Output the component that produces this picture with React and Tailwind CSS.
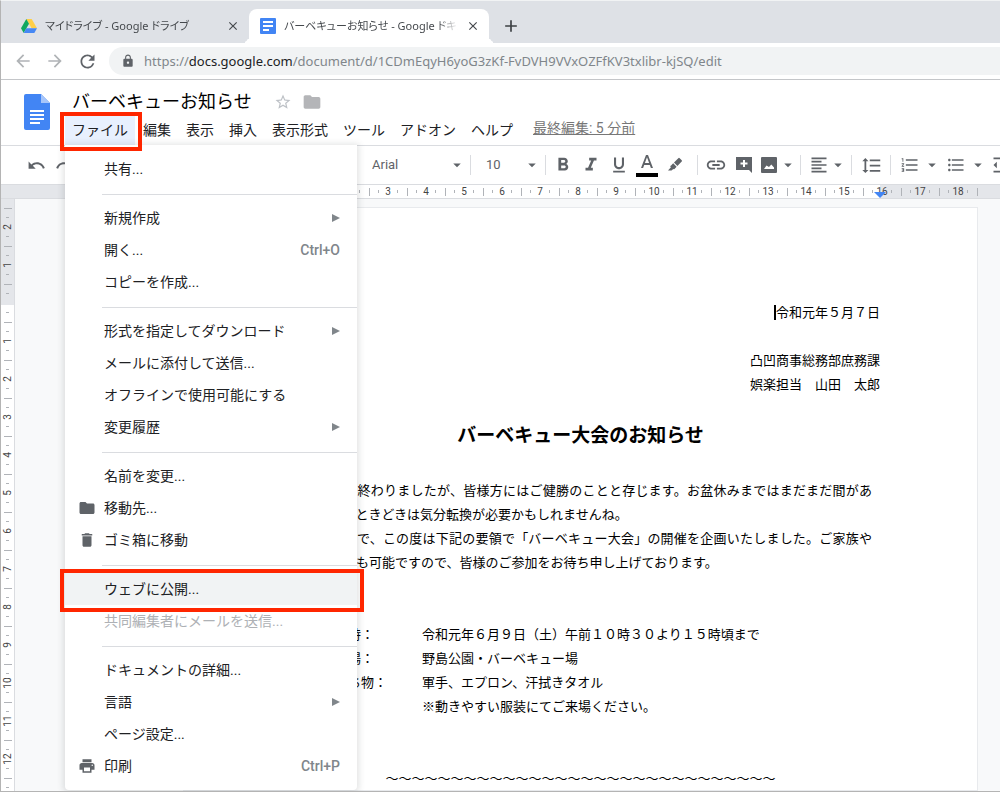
import clsx from "clsx";
import {
  MdAdd,
  MdArrowBack,
  MdArrowDropDown,
  MdArrowForward,
  MdClose,
  MdDelete,
  MdFolder,
  MdFormatAlignLeft,
  MdFormatBold,
  MdFormatIndentDecrease,
  MdFormatItalic,
  MdFormatLineSpacing,
  MdFormatListBulleted,
  MdFormatListNumbered,
  MdFormatUnderlined,
  MdLink,
  MdLock,
  MdPrint,
  MdRedo,
  MdRefresh,
  MdStarBorder,
  MdUndo,
} from "react-icons/md";

// null draws a separator line
const fileMenu = [
  { label: "共有..." },
  null,
  { label: "新規作成", sub: true },
  { label: "開く...", shortcut: "Ctrl+O" },
  { label: "コピーを作成..." },
  null,
  { label: "形式を指定してダウンロード", sub: true },
  { label: "メールに添付して送信..." },
  { label: "オフラインで使用可能にする" },
  { label: "変更履歴", sub: true },
  null,
  { label: "名前を変更..." },
  { label: "移動先...", icon: MdFolder },
  { label: "ゴミ箱に移動", icon: MdDelete },
  null,
  { label: "ウェブに公開...", active: true },
  { label: "共同編集者にメールを送信...", disabled: true },
  null,
  { label: "ドキュメントの詳細..." },
  { label: "言語", sub: true },
  { label: "ページ設定..." },
  { label: "印刷", icon: MdPrint, shortcut: "Ctrl+P" },
];

const menus = ["編集", "表示", "挿入", "表示形式", "ツール", "アドオン", "ヘルプ"];

const columns = Array.from({ length: 18 }, (_, i) => i + 1);
const rows = [2, 1, "", 1, 2, 3, 4, 5, 6, 7, 8, 9, 10, 11, 12, ""];

const paragraphs = [
  "　大型連休も終わりましたが、皆様方にはご健勝のことと存じます。お盆休みまではまだまだ間がありますので、ときどきは気分転換が必要かもしれませんね。",
  "　ということで、この度は下記の要領で「バーベキュー大会」の開催を企画いたしました。ご家族やご友人の参加も可能ですので、皆様のご参加をお待ち申し上げております。",
];

function DriveIcon() {
  return (
    <svg viewBox="0 0 16 14" className="w-4 h-[14px] shrink-0">
      <path d="M5.3 0h5.4L16 9.2h-5.4z" fill="#ffcf48" />
      <path d="M5.3 0 0 9.2 2.7 14 8 4.7z" fill="#11a861" />
      <path d="M5.3 9.2H16L13.3 14H2.7z" fill="#4688f4" />
    </svg>
  );
}

function DocsTabIcon() {
  return (
    <svg viewBox="0 0 16 16" className="size-4 shrink-0">
      <rect width="16" height="16" rx="1" fill="#4285f4" />
      <path d="M3 3h10v2H3zM3 7h10v2H3zM3 11h6v2H3z" fill="#fff" />
    </svg>
  );
}

function DocsLogo() {
  return (
    <svg viewBox="0 0 26 36" className="w-[26px] h-9 shrink-0">
      <path d="M2 0h15l9 9v25a2 2 0 0 1-2 2H2a2 2 0 0 1-2-2V2a2 2 0 0 1 2-2z" fill="#4285f4" />
      <path d="M17 0l9 9h-9z" fill="#a6c5fa" />
      <path d="M6 16h14v2H6zM6 20h14v2H6zM6 24h14v2H6zM6 28h10v2H6z" fill="#fff" />
    </svg>
  );
}

function HighlighterIcon() {
  return (
    <svg viewBox="0 0 16 16" className="size-4" fill="currentColor">
      <path d="M11.3 1.2a1 1 0 0 1 1.4 0l2 2a1 1 0 0 1 0 1.4L10.4 9 7 5.5z" />
      <path d="M6.2 6.3 9.6 9.8 7.5 11.9a1 1 0 0 1-1.2.2L4.5 13.5H1l2.9-3.2a1 1 0 0 1 .2-1.9z" />
    </svg>
  );
}

function CommentIcon() {
  return (
    <svg viewBox="0 0 16 16" className="size-4" fill="currentColor">
      <path fillRule="evenodd" d="M0 0h16v16l-3-3H0zM7 3v2.500H4.500v2H7V10h2V7.500h2.500v-2H9V3z" />
    </svg>
  );
}

function ImageIcon() {
  return (
    <svg viewBox="0 0 16 16" className="size-4" fill="currentColor">
      <path fillRule="evenodd" d="M0 1a1 1 0 0 1 1-1h14a1 1 0 0 1 1 1v14a1 1 0 0 1-1 1H1a1 1 0 0 1-1-1zM3 12h10V10.500L10.300 7.500 8 10 5.500 8.500z" />
    </svg>
  );
}

function ToolButton({ label, children }) {
  return (
    <button aria-label={label} className="w-7 h-7 shrink-0 flex items-center justify-center">
      {children}
    </button>
  );
}

function DropButton({ label, children, className }) {
  return (
    <button aria-label={label} className={clsx("h-7 shrink-0 flex items-center justify-center", className)}>
      {children}
      <MdArrowDropDown className="size-[18px] -mr-1" />
    </button>
  );
}

function Divider() {
  return <div className="w-px h-5 shrink-0 bg-[#dadce0]" />;
}

function ToolSelect({ label, value, className }) {
  return (
    <label className={clsx("relative flex items-center shrink-0", className)}>
      <select aria-label={label} className="w-full appearance-none bg-transparent text-[13px] leading-5">
        <option>{value}</option>
      </select>
      <MdArrowDropDown className="absolute right-1 size-[18px] pointer-events-none" />
    </label>
  );
}

function Tab({ icon, title, active }) {
  return (
    <div
      className={clsx(
        "relative flex items-center gap-2 h-[34px] shrink-0 pr-[9px] text-[#45494d]",
        active
          ? "w-[240px] pl-[11px] bg-white rounded-t-lg before:absolute before:-left-2 before:bottom-0 before:size-2 before:rounded-br-lg before:shadow-[4px_4px_0_white] after:absolute after:-right-2 after:bottom-0 after:size-2 after:rounded-bl-lg after:shadow-[-4px_4px_0_white]"
          : "w-[248px] pl-5"
      )}
    >
      {icon}
      <span className="flex-1 overflow-hidden whitespace-nowrap text-[11px] leading-5 [font-feature-settings:'palt'] [mask-image:linear-gradient(to_left,transparent,black_20px)]">
        {title}
      </span>
      <button aria-label="閉じる" className="shrink-0">
        <MdClose className="size-[14px]" />
      </button>
    </div>
  );
}

function BrowserBar() {
  return (
    <div className="shrink-0 font-['Noto_Sans','Noto_Sans_CJK_JP',sans-serif]">
      <div className="flex items-end h-[42px] bg-[#dee1e6]">
        <Tab icon={<DriveIcon />} title="マイドライブ - Google ドライブ" />
        <Tab icon={<DocsTabIcon />} title="バーベキューお知らせ - Google ドキュメント" active />
        <button aria-label="新しいタブ" className="ml-3 h-[34px] text-[#3c4043]">
          <MdAdd className="size-5" />
        </button>
      </div>
      <div className="flex items-center h-9 pl-3 text-[#5f6368]">
        <button aria-label="戻る" className="w-8 text-[#b0b3b6]">
          <MdArrowBack className="size-5" />
        </button>
        <button aria-label="進む" className="w-8 text-[#b0b3b6]">
          <MdArrowForward className="size-5" />
        </button>
        <button aria-label="再読み込み" className="w-8">
          <MdRefresh className="size-[21px]" />
        </button>
        <div className="flex-1 flex items-center gap-[9px] h-7 pl-3 rounded-l-full bg-[#f1f3f4]">
          <MdLock className="size-[14px]" />
          <p className="text-[13px] leading-5 text-[#80868b]">
            https://<span className="text-[#202124]">docs.google.com</span>
            /document/d/1CDmEqyH6yoG3zKf-FvDVH9VVxOZFfKV3txlibr-kjSQ/edit
          </p>
        </div>
      </div>
    </div>
  );
}

function FileMenu() {
  return (
    <div className="absolute left-0 top-full w-[292px] pt-2 pb-2 bg-white rounded-b shadow-[0_1px_6px_2px_rgba(60,64,67,0.15)]">
      {fileMenu.map((item, i) =>
        item === null ? (
          <hr key={i} className="ml-[37px] mt-[9px] mb-[7px] border-t border-[#dadce0]" />
        ) : (
          <button
            key={i}
            disabled={item.disabled}
            className={clsx(
              "relative flex items-center w-full h-8 pl-[13px] pr-[17px] text-[14px] leading-5",
              item.active && "bg-[#f1f3f4]",
              item.disabled ? "text-[#aeb1b5]" : "text-[#202124]"
            )}
          >
            <span className="w-[26px] text-[#5f6368]">
              {item.icon && <item.icon className="size-[18px]" />}
            </span>
            <span>{item.label}</span>
            {item.sub && (
              <svg viewBox="0 0 8 8" className="ml-auto size-2 text-[#80868b]" fill="currentColor">
                <path d="M0 0l8 4-8 4z" />
              </svg>
            )}
            {item.shortcut && <span className="ml-auto font-medium text-[#80868b]">{item.shortcut}</span>}
            {item.active && (
              <span className="absolute -left-[5px] -right-[7px] -top-1 -bottom-[7px] z-10 border-4 border-[#ff2600]" />
            )}
          </button>
        )
      )}
    </div>
  );
}

function Header() {
  return (
    <header className="relative z-20 flex h-[66px] shrink-0 pl-[23px] border-t border-[#c4c6c9]">
      <div className="pt-[14px]">
        <DocsLogo />
      </div>
      <div className="flex flex-col pl-[15px] pt-2">
        <div className="flex items-center h-7 pl-[7px]">
          <h1 className="text-[18px] leading-7 text-black">バーベキューお知らせ</h1>
          <button aria-label="スター" className="ml-[22px] text-[#bdc1c6]">
            <MdStarBorder className="size-[18px]" />
          </button>
          <button aria-label="フォルダ" className="ml-[10px] text-[#b4b5b8]">
            <MdFolder className="size-5" />
          </button>
        </div>
        <nav className="flex gap-px text-[14px] leading-[29px] text-[#202124]">
          <div className="relative">
            <button className="h-[29px] px-[7px] bg-[#e8f0fe]">ファイル</button>
            <FileMenu />
            <div className="absolute -left-[5px] -right-[7px] -top-1 -bottom-[6px] z-10 border-4 border-[#ff2600] pointer-events-none" />
          </div>
          {menus.map((m) => (
            <button key={m} className="h-[29px] px-[7px]">
              {m}
            </button>
          ))}
          <a href="#" className="ml-3 h-6 leading-6 text-[#777] underline">
            最終編集: 5 分前
          </a>
        </nav>
      </div>
    </header>
  );
}

function Toolbar() {
  return (
    <div className="flex items-center h-[39px] shrink-0 overflow-hidden border-t border-[#dadce0] text-[#5f6368]">
      <div className="flex w-[371px] shrink-0 pl-[21px]">
        <ToolButton label="元に戻す">
          <MdUndo className="size-[19px]" />
        </ToolButton>
        <ToolButton label="やり直し">
          <MdRedo className="size-[19px]" />
        </ToolButton>
      </div>
      <ToolSelect label="フォント" value="Arial" className="w-[98px]" />
      <Divider />
      <ToolSelect label="フォントサイズ" value="10" className="w-[74px] pl-[15px]" />
      <Divider />
      <div className="flex pl-[3px] pr-2">
        <ToolButton label="太字">
          <MdFormatBold className="size-[22px]" />
        </ToolButton>
        <ToolButton label="斜体">
          <MdFormatItalic className="size-[22px]" />
        </ToolButton>
        <ToolButton label="下線">
          <MdFormatUnderlined className="size-5" />
        </ToolButton>
        <ToolButton label="テキストの色">
          <svg viewBox="0 0 22 24" className="w-[22px] h-6">
            <path d="M10 2 5 15h2.100l1.100-3h5.600l1.100 3H17L12 2zm-1.100 8L11 4.300 13.100 10z" fill="currentColor" />
            <path d="M0 20h22v4H0z" fill="#000" />
          </svg>
        </ToolButton>
        <ToolButton label="ハイライトの色">
          <HighlighterIcon />
        </ToolButton>
      </div>
      <Divider />
      <div className="flex px-1">
        <ToolButton label="リンクを挿入">
          <MdLink className="size-[22px]" />
        </ToolButton>
        <ToolButton label="コメントを追加">
          <CommentIcon />
        </ToolButton>
        <DropButton label="画像を挿入" className="w-[38px] gap-[2px]">
          <ImageIcon />
        </DropButton>
      </div>
      <Divider />
      <DropButton label="配置" className="w-[50px]">
        <MdFormatAlignLeft className="size-5" />
      </DropButton>
      <Divider />
      <div className="px-[5px]">
        <ToolButton label="行間隔">
          <MdFormatLineSpacing className="size-[21px]" />
        </ToolButton>
      </div>
      <Divider />
      <div className="flex pl-1">
        <DropButton label="番号付きリスト" className="w-[46px] gap-[3px]">
          <MdFormatListNumbered className="size-5" />
        </DropButton>
        <DropButton label="箇条書き" className="w-[46px] gap-[3px]">
          <MdFormatListBulleted className="size-5" />
        </DropButton>
        <ToolButton label="インデント減">
          <MdFormatIndentDecrease className="size-5" />
        </ToolButton>
      </div>
    </div>
  );
}

function HorizontalRuler() {
  return (
    <div className="relative flex justify-end items-center h-[15px] pr-[23px] shrink-0 overflow-hidden border-y border-[#dadce0] bg-[#e4e6ea] text-[10px] leading-3 text-[#444]">
      <div className="absolute inset-y-0 right-[120px] w-[603px] bg-white" />
      {columns.map((n) => (
        <div key={n} className="relative flex items-center w-[38px] shrink-0">
          <i className="w-px h-2 bg-[#b0b3b8]" />
          <i className="w-px h-[3px] ml-2 bg-[#b0b3b8]" />
          <span className="w-[18px] text-center">{n}</span>
          <i className="w-px h-[3px] bg-[#b0b3b8]" />
        </div>
      ))}
      <i className="relative w-px h-2 -mr-px shrink-0 bg-[#b0b3b8]" />
      <svg viewBox="0 0 12 6" className="absolute right-[114px] bottom-0 w-3 h-[6px]">
        <path d="M0 0h12L6 6z" fill="#4285f4" />
      </svg>
    </div>
  );
}

function VerticalRuler() {
  return (
    <div className="relative w-[14px] shrink-0 overflow-hidden pt-[9px] border-r border-[#dadce0] bg-white text-[10px] leading-3 text-[#444]">
      <div className="absolute inset-x-0 top-0 h-[106px] bg-[#e4e6ea]" />
      {rows.map((n, i) => (
        <div key={i} className="relative flex flex-col items-center h-[38px]">
          <i className="h-px w-2 shrink-0 bg-[#b0b3b8]" />
          <i className="h-px w-[3px] mt-2 shrink-0 bg-[#b0b3b8]" />
          <span className="flex items-center justify-center h-[18px] shrink-0 -rotate-90">{n}</span>
          <i className="h-px w-[3px] shrink-0 bg-[#b0b3b8]" />
        </div>
      ))}
    </div>
  );
}

function Detail({ term, children }) {
  return (
    <div className="flex">
      <dt className="w-[100px] whitespace-nowrap">{term}</dt>
      <dd>{children}</dd>
    </div>
  );
}

function DocumentPage() {
  return (
    <main className="flex-1 flex justify-end pr-[22px] pt-2 min-w-0 bg-[#f8f9fa]">
      <article className="w-[795px] shrink-0 px-[94px] pt-[93px] border border-[#e8eaed] bg-white text-[13px] leading-6 text-black">
        <div className="text-right pr-[3px]">
          <p>
            <span className="border-l-2 border-black">令和元年５月７日</span>
          </p>
          <p className="mt-6">凸凹商事総務部庶務課</p>
          <p>娯楽担当　山田　太郎</p>
        </div>
        <h2 className="mt-6 text-center text-[19px] leading-[30px] font-bold">バーベキュー大会のお知らせ</h2>
        <div className="mt-7 w-[594px] text-justify">
          {paragraphs.map((text) => (
            <p key={text}>{text}</p>
          ))}
        </div>
        <dl className="mt-12 pl-11">
          <Detail term="日　時：">令和元年６月９日（土）午前１０時３０より１５時頃まで</Detail>
          <Detail term="会　場：">野島公園・バーベキュー場</Detail>
          <Detail term="お持ち物：">
            軍手、エプロン、汗拭きタオル
            <br />
            ※動きやすい服装にてご来場ください。
          </Detail>
        </dl>
        <p className="mt-12 text-center whitespace-nowrap">～～～～～～～～～～～～～～～～～～～～～～～～～～～～～～</p>
      </article>
    </main>
  );
}

export default function App() {
  return (
    <div className="flex flex-col h-screen overflow-hidden border-l border-b border-t border-[#b4b4b4] border-t-[#f1f3f4] bg-white font-[Roboto,'Noto_Sans_CJK_JP',sans-serif]">
      <BrowserBar />
      <Header />
      <Toolbar />
      <HorizontalRuler />
      <div className="flex flex-1 min-h-0 overflow-hidden">
        <VerticalRuler />
        <DocumentPage />
      </div>
    </div>
  );
}
